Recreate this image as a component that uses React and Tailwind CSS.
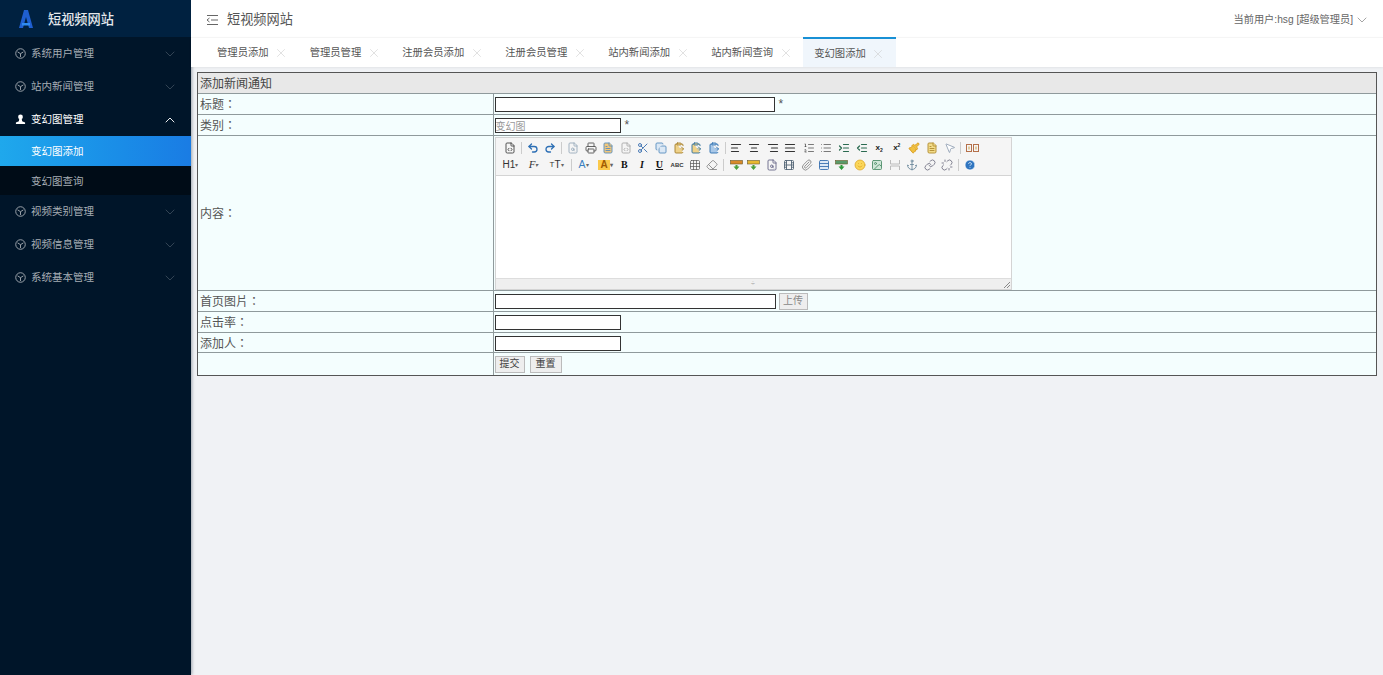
import React from "react";
import {
  Anchor,
  AlignCenter,
  AlignJustify,
  AlignLeft,
  AlignRight,
  ChevronDown,
  ChevronUp,
  CircleHelp,
  ClipboardPaste,
  Copy,
  Eraser,
  FileCode,
  FileSearch,
  FileText,
  Film,
  Grid3x3,
  Image,
  Indent,
  Link,
  List,
  ListOrdered,
  MousePointer2,
  Outdent,
  Paintbrush,
  Paperclip,
  Printer,
  Redo2,
  Scissors,
  Smile,
  Table,
  Undo2,
  Unlink,
  X,
} from "lucide-react";

const cjk = "font-['Liberation_Sans','Noto_Sans_CJK_SC',sans-serif]";

const tabs = ["管理员添加", "管理员管理", "注册会员添加", "注册会员管理", "站内新闻添加", "站内新闻查询", "变幻图添加"];

function CubeIcon() {
  return (
    <svg width="11" height="11" viewBox="0 0 12 12" fill="none" stroke="currentColor" strokeWidth="1">
      <circle cx="6" cy="6" r="5.2" />
      <path d="M2.8 4.2L6 6.2l3.2-2M6 6.2v3.6" />
    </svg>
  );
}

function PawnIcon() {
  return (
    <svg width="11" height="11" viewBox="0 0 12 12" fill="currentColor">
      <circle cx="6" cy="3.2" r="2.6" />
      <path d="M4.6 5.4h2.8l.4 2.6 3.2 1.4V11H1V9.4L4.2 8z" />
    </svg>
  );
}

function MenuItem({ label, open }) {
  return (
    <div className={`flex h-[33px] items-center pl-[15px] pr-[13px] text-[10.5px] ${open ? "text-white" : "text-[#a6adb4]"}`}>
      {open ? <PawnIcon /> : <CubeIcon />}
      <span className="ml-[5px] flex-1">{label}</span>
      {open ? <ChevronUp size={16} strokeWidth={1.4} /> : <ChevronDown size={16} strokeWidth={1} className="text-[#4d5c6b]" />}
    </div>
  );
}

function Sidebar() {
  return (
    <aside className="flex w-[191px] shrink-0 flex-col bg-[#001529] shadow-[1px_0_3px_rgba(0,21,41,0.35)]">
      <div className="flex h-[37px] items-center bg-[#002140] pl-[18px]">
        <svg width="16" height="20" viewBox="0 0 16 20">
          <path d="M6 1h4l5 18h-4l-3-11-3 11H1z" fill="#1f5fd0" />
          <path d="M4 14h8v2.5H4z" fill="#2f8bf0" />
        </svg>
        <span className="ml-[14px] mt-[2px] text-[13.2px] font-medium text-[#e4e8ec]">短视频网站</span>
      </div>
      <MenuItem label="系统用户管理" />
      <MenuItem label="站内新闻管理" />
      <MenuItem label="变幻图管理" open />
      <div className="flex h-[30px] items-center bg-gradient-to-r from-[#1fa8ec] to-[#1a7ce4] pl-[31px] pt-[1px] text-[10.5px] text-white">变幻图添加</div>
      <div className="flex h-[29px] items-center bg-[#000c17] pl-[31px] pt-[2px] text-[10.5px] text-[#a6adb4]">变幻图查询</div>
      <MenuItem label="视频类别管理" />
      <MenuItem label="视频信息管理" />
      <MenuItem label="系统基本管理" />
    </aside>
  );
}

function Header() {
  return (
    <header className="flex h-[37px] shrink-0 items-center bg-white pl-[15px] pr-[13px] pt-[2px] text-[#555]">
      <svg width="13" height="12" viewBox="0 0 13 12" fill="none" stroke="#666" strokeWidth="1">
        <path d="M1 1.500h11M5 6h7M1 10.500h11M3.500 4L1 6l2.500 2" />
      </svg>
      <span className="ml-[8px] flex-1 text-[13.2px] text-[#555]">短视频网站</span>
      <span className="text-[10.2px] text-[#666]">当前用户:hsg [超级管理员]</span>
      <ChevronDown size={16} strokeWidth={1} className="ml-[1px] text-[#777]" />
    </header>
  );
}

function TabBar() {
  return (
    <nav className="flex h-[30px] shrink-0 items-stretch border-t border-[#f5f5f5] bg-white pl-[15px] shadow-[0_1px_2px_rgba(0,0,0,0.06)]">
      {tabs.map((t, i) => {
        const active = i === tabs.length - 1;
        return (
          <div
            key={t}
            className={`flex items-center pl-[11px] pr-[10.500px] pt-[1px] text-[10.33px] text-[#555] ${active ? "-mt-[1px] border-t-2 border-[#1890d5] bg-[#f0f6fc]" : ""}`}
          >
            {t}
            <X size={14} strokeWidth={1} className="ml-[5.500px] text-[#ccc]" />
          </div>
        );
      })}
    </nav>
  );
}

function Sep() {
  return <span className="mx-[2px] h-[12px] w-px shrink-0 bg-[#ccc]" />;
}

function Ic({ icon: Icon, color = "#555", fill = "none", stroke = 1.8 }) {
  return (
    <span className="flex w-[17.6px] shrink-0 justify-center">
      <Icon size={12} color={color} fill={fill} strokeWidth={stroke} />
    </span>
  );
}

function Tx({ children, className = "", w = "w-[17.6px]" }) {
  return <span className={`flex shrink-0 items-center justify-center leading-none ${w} ${className}`}>{children}</span>;
}

function BarArrow({ bar, arrow }) {
  return (
    <span className="flex w-[17.6px] shrink-0 justify-center">
      <svg width="13" height="12" viewBox="0 0 13 12">
        <rect x="0.500" y="1.500" width="12" height="3.500" fill={bar} stroke="#6b5a2a" strokeWidth="0.6" />
        <path d="M6.500 11L3.500 7.500h2V6h2v1.500h2z" fill={arrow} />
      </svg>
    </span>
  );
}

function FullIcon() {
  return (
    <span className="flex w-[17.6px] shrink-0 justify-center">
      <svg width="13" height="10" viewBox="0 0 13 10" fill="none" stroke="#b5704a" strokeWidth="1">
        <rect x="0.500" y="1.500" width="5" height="7" />
        <rect x="7.500" y="1.500" width="5" height="7" />
        <path d="M3 3.500v3M10 3.500v3" stroke="#c9a04a" />
      </svg>
    </span>
  );
}

function SplitIcon() {
  return (
    <span className="flex w-[17.6px] shrink-0 justify-center">
      <svg width="12" height="12" viewBox="0 0 12 12" fill="none" stroke="#bbb" strokeWidth="1">
        <path d="M1.500 1v4h9V1M1.500 11V7h9v4" />
      </svg>
    </span>
  );
}

function Editor() {
  return (
    <div className="flex h-[153px] w-[517px] flex-col border border-[#d4d4d4] bg-white">
      <div className="h-[38px] border-b border-[#d4d4d4] bg-[#f5f5f5] pl-[6px] pt-[2px]">
        <div className="flex h-[16px] items-center">
          <Ic icon={FileCode} color="#444" />
          <Sep />
          <Ic icon={Undo2} color="#2d6fb5" stroke={2.6} />
          <Ic icon={Redo2} color="#2d6fb5" stroke={2.6} />
          <Sep />
          <Ic icon={FileSearch} color="#9ab" />
          <Ic icon={Printer} color="#555" />
          <Ic icon={FileText} color="#5a8fc0" fill="#f3c77a" />
          <Ic icon={FileCode} color="#aaa" />
          <Ic icon={Scissors} color="#3a6fb0" />
          <Ic icon={Copy} color="#5a8fc0" fill="#dbe8f5" />
          <Ic icon={ClipboardPaste} color="#a57f2c" fill="#efd28a" />
          <Ic icon={ClipboardPaste} color="#2e6f9e" fill="#efd28a" />
          <Ic icon={ClipboardPaste} color="#2e6fb0" fill="#a9c8e8" />
          <Sep />
          <Ic icon={AlignLeft} color="#333" stroke={2.4} />
          <Ic icon={AlignCenter} color="#333" stroke={2.4} />
          <span className="w-px shrink-0" />
          <Ic icon={AlignRight} color="#333" stroke={2.4} />
          <Ic icon={AlignJustify} color="#333" stroke={2.4} />
          <span className="w-px shrink-0" />
          <Ic icon={ListOrdered} color="#444" stroke={1.4} />
          <Ic icon={List} color="#444" stroke={1.4} />
          <Ic icon={Indent} color="#2a6a50" stroke={2.4} />
          <Ic icon={Outdent} color="#2a6a50" stroke={2.4} />
          <Tx className="text-[8px] font-bold text-[#222]">x<span className="mt-[5px] text-[5px]">2</span></Tx>
          <Tx className="text-[8px] font-bold text-[#222]">x<span className="mb-[5px] text-[5px]">2</span></Tx>
          <Ic icon={Paintbrush} color="#d79a1c" fill="#f0c040" />
          <Ic icon={FileText} color="#b08a30" fill="#f3dc8a" />
          <Ic icon={MousePointer2} color="#7a8da5" fill="#fff" stroke={1.4} />
          <Sep />
          <FullIcon />
        </div>
        <div className="flex h-[18px] items-center">
          <Tx w="w-[18px]" className="text-[10px] text-[#333]">H1<span className="text-[6px] text-[#666]">▾</span></Tx>
          <Tx w="w-[18px]" className="ml-[5px] font-['Liberation_Serif'] text-[11px] italic text-[#333]">F<span className="text-[6px] text-[#666]">▾</span></Tx>
          <Tx w="w-[18px]" className="ml-[5px] text-[10px] text-[#333]"><span className="text-[8px]">T</span>T<span className="text-[6px] text-[#666]">▾</span></Tx>
          <span className="ml-[3px]" />
          <Sep />
          <Tx w="w-[16px]" className="ml-[2px] text-[10.5px] text-[#3a7fc0]">A<span className="text-[6px] text-[#666]">▾</span></Tx>
          <Tx w="w-[20px]" className="ml-[4px] text-[10px] font-bold text-[#a05a00]"><span className="bg-[#fbc94a] px-[2px]">A</span><span className="text-[6px] text-[#666]">▾</span></Tx>
          <Tx className="font-['Liberation_Serif'] text-[10px] font-bold text-[#111]">B</Tx>
          <Tx className="font-['Liberation_Serif'] text-[10px] font-bold italic text-[#111]">I</Tx>
          <Tx className="font-['Liberation_Serif'] text-[10px] font-bold text-[#111] underline">U</Tx>
          <Tx className="text-[6px] font-bold text-[#333]">ABC</Tx>
          <Ic icon={Grid3x3} color="#555" stroke={1.4} />
          <Ic icon={Eraser} color="#888" />
          <Sep />
          <span className="ml-[1.5px]" />
          <BarArrow bar="#d88a2a" arrow="#4aa03a" />
          <BarArrow bar="#e8b830" arrow="#4aa03a" />
          <Ic icon={FileSearch} color="#668" />
          <Ic icon={Film} color="#567" />
          <Ic icon={Paperclip} color="#888" />
          <Ic icon={Table} color="#3a70b0" fill="#dce8f5" />
          <BarArrow bar="#5a9a6a" arrow="#2e9a3a" />
          <Ic icon={Smile} color="#d8a020" fill="#fbd65a" stroke={1.4} />
          <Ic icon={Image} color="#4f8f6a" fill="#cfe6d8" />
          <SplitIcon />
          <Ic icon={Anchor} color="#6d8a9d" />
          <Ic icon={Link} color="#778" />
          <Ic icon={Unlink} color="#778" />
          <Sep />
          <Ic icon={CircleHelp} color="#fff" fill="#2f75c0" stroke={1.4} />
        </div>
      </div>
      <div className="flex-1" />
      <div className="relative flex h-[11px] items-center justify-center border-t border-[#ddd] bg-[#efefef] text-[7px] leading-none text-[#999]">
        ÷
        <svg width="8" height="8" viewBox="0 0 8 8" className="absolute bottom-0 right-0">
          <path d="M1 7l6-6M4 7l3-3" stroke="#888" fill="none" />
        </svg>
      </div>
    </div>
  );
}

function Field({ w, value }) {
  return (
    <input
      readOnly
      value={value || ""}
      className={`box-border h-[15px] border border-[#333] bg-white px-0 text-[10px] leading-none text-[#999] ${w}`}
    />
  );
}

function Btn({ children, className = "" }) {
  return (
    <button className={`box-border h-[17px] whitespace-nowrap border border-[#bbb] bg-[#eee] px-0 text-[10px] leading-none text-[#444] ${className}`}>
      {children}
    </button>
  );
}

function Row({ label, h, pad = "pt-[1px]", children }) {
  return (
    <tr className={h}>
      <td className={`border border-[#8f9a9c] pl-[2px] align-middle font-['Noto_Sans_CJK_TC',sans-serif] ${pad === "pt-[2px]" ? "pt-[2px]" : ""}`}>{label}</td>
      <td className="border border-[#8f9a9c] pl-[1px] align-middle">
        <div className={`flex items-center ${pad}`}>{children}</div>
      </td>
    </tr>
  );
}

export default function App() {
  return (
    <div className={`flex h-[675px] w-[1383px] overflow-hidden bg-[#f0f2f5] ${cjk}`}>
      <Sidebar />
      <main className="flex min-w-0 flex-1 flex-col">
        <Header />
        <TabBar />
        <div className="px-[6px] pt-[5px]">
          <div className="w-[1180px] border border-[#555]">
            <table className="h-[302px] w-full table-fixed border-collapse border-hidden bg-[#f4fefe] text-[12px] leading-none text-[#555]">
              <colgroup>
                <col className="w-[295px]" />
                <col />
              </colgroup>
              <tbody>
                <tr className="h-[20px]">
                  <td colSpan={2} className="border border-[#8f9a9c] bg-[#e8e8e8] pl-[2px] pt-[2px] text-[#444]">添加新闻通知</td>
                </tr>
                <Row label="标题：" h="h-[21px]">
                  <Field w="w-[280px]" />
                  <span className="ml-[4px]">*</span>
                </Row>
                <Row label="类别：" h="h-[21px]">
                  <Field w="w-[126px]" value="变幻图" />
                  <span className="ml-[4px]">*</span>
                </Row>
                <Row label="内容：" h="h-[155px]">
                  <Editor />
                </Row>
                <Row label="首页图片：" h="h-[21px]">
                  <Field w="w-[281px]" />
                  <Btn className="ml-[3px] h-[16px] w-[29px] border-[#999] bg-[#ddd] text-[#888]">上传</Btn>
                </Row>
                <Row label="点击率：" h="h-[21px]">
                  <Field w="w-[126px]" />
                </Row>
                <Row label="添加人：" h="h-[20px]" pad="pt-[2px]">
                  <Field w="w-[126px]" />
                </Row>
                <Row label="" h="h-[23px]">
                  <Btn className="w-[30px]">提交</Btn>
                  <Btn className="ml-[5px] w-[32px]">重置</Btn>
                </Row>
              </tbody>
            </table>
          </div>
        </div>
      </main>
    </div>
  );
}
